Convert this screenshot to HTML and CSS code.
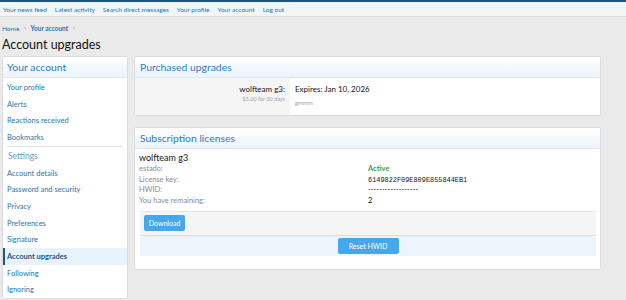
FILE: index.html
```html
<!DOCTYPE html>
<html lang="en">
<head>
    <meta charset="UTF-8">
    <title>Account upgrades</title>
    <link rel="stylesheet" href="styles.css">
</head>
<body>
    <div class="top-strip"></div>
    <nav class="sub-nav">
        <a href="#">Your news feed</a>
        <a href="#">Latest activity</a>
        <a href="#">Search direct messages</a>
        <a href="#">Your profile</a>
        <a href="#">Your account</a>
        <a href="#">Log out</a>
    </nav>

    <div class="page">
        <div class="crumbs">
            <a href="#">Home</a><span class="sep">&gt;</span><a href="#" class="crumb-current">Your account</a><span class="sep">&gt;</span>
        </div>
        <h1 class="page-title">Account upgrades</h1>

        <div class="page-body">
            <aside class="side-block">
                <h3 class="block-head">Your account</h3>
                <div class="side-list">
                    <a href="#" class="side-item">Your profile</a>
                    <a href="#" class="side-item">Alerts</a>
                    <a href="#" class="side-item">Reactions received</a>
                    <a href="#" class="side-item">Bookmarks</a>
                </div>
                <div class="side-list side-list--split">
                    <div class="side-sub">Settings</div>
                    <a href="#" class="side-item">Account details</a>
                    <a href="#" class="side-item">Password and security</a>
                    <a href="#" class="side-item">Privacy</a>
                    <a href="#" class="side-item">Preferences</a>
                    <a href="#" class="side-item">Signature</a>
                    <a href="#" class="side-item is-selected">Account upgrades</a>
                    <a href="#" class="side-item">Following</a>
                    <a href="#" class="side-item">Ignoring</a>
                </div>
            </aside>

            <main class="main-col">
                <section class="block">
                    <h3 class="block-head">Purchased upgrades</h3>
                    <div class="upgrade-row">
                        <div class="upgrade-name">
                            <div class="upgrade-title">wolfteam g3:</div>
                            <div class="upgrade-cost">$5.00 for 30 days</div>
                        </div>
                        <div class="upgrade-info">
                            <div>Expires: Jan 10, 2026</div>
                            <div class="upgrade-note">gmmm</div>
                        </div>
                    </div>
                </section>

                <section class="block block--licenses">
                    <h3 class="block-head">Subscription licenses</h3>
                    <div class="license">
                        <div class="license-name">wolfteam g3</div>
                        <dl class="license-facts">
                            <dt>estado:</dt>
                            <dd class="is-active">Active</dd>
                            <dt>License key:</dt>
                            <dd class="mono">6149822F09E809E855844EB1</dd>
                            <dt>HWID:</dt>
                            <dd>------------------</dd>
                            <dt>You have remaining:</dt>
                            <dd>2</dd>
                        </dl>
                    </div>
                    <div class="license-actions">
                        <button class="btn">Download</button>
                    </div>
                    <div class="license-footer">
                        <button class="btn btn--wide">Reset HWID</button>
                    </div>
                </section>
            </main>
        </div>
    </div>
</body>
</html>
```

FILE: styles.css
```css
:root {
    --link: #2577b1;
    --navy: #185886;
    --border: #dcdcdc;
    --muted: #8c8c8c;
    --text: #141414;
}

* {
    margin: 0;
    padding: 0;
    box-sizing: border-box;
}

body {
    background: #eaeaea;
    font-family: Lato, 'Open Sans', sans-serif;
    color: var(--text);
    font-size: 7.5px;
}

a {
    color: var(--link);
    text-decoration: none;
}

.top-strip {
    height: 2px;
    background: var(--navy);
}

.sub-nav {
    height: 15px;
    background: #f4f5f5;
    border-bottom: 1px solid #dedede;
    display: flex;
    align-items: center;
    gap: 8px;
    padding-left: 3px;
    font-size: 6.5px;
}

.page {
    padding: 0 2px;
}

.crumbs {
    display: flex;
    align-items: center;
    height: 10px;
    margin-top: 6px;
    font-size: 6.5px;
}

.crumbs .sep {
    color: #a6a6a6;
    margin: 0 4px;
    font-size: 5.5px;
}

.crumb-current {
    font-weight: 700;
}

.page-title {
    font-size: 12.5px;
    font-weight: 400;
    line-height: 18px;
    margin-top: 3px;
    margin-bottom: 2px;
}

.page-body {
    display: flex;
    align-items: flex-start;
    gap: 6px;
}

.side-block {
    width: 126px;
    background: #fff;
    border: 1px solid var(--border);
    border-radius: 2px;
}

.block-head {
    height: 21px;
    display: flex;
    align-items: center;
    padding-left: 5px;
    font-size: 10.4px;
    font-weight: 400;
    color: #2f7cbd;
    background: linear-gradient(to bottom, #ffffff, #eaf3fc);
    border-bottom: 1px solid #e2e8ee;
}

.side-block .block-head {
    padding-left: 4px;
}

.side-list {
    display: flex;
    flex-direction: column;
    padding-top: 1px;
}

.side-list--split {
    border-top: 1px solid #e3e3e3;
    margin: 0 4px;
    padding-top: 0;
}

.side-list--split .side-item,
.side-list--split .side-sub {
    margin: 0 -4px;
}

.side-item {
    height: 16.7px;
    display: flex;
    align-items: center;
    font-size: 7.5px;
    border-left: 2px solid transparent;
    padding-left: 2px;
}

.side-item.is-selected {
    background: #e9f3fb;
    border-left-color: var(--navy);
    color: var(--navy);
    font-weight: 700;
}

.side-sub {
    height: 18px;
    display: flex;
    align-items: center;
    padding-left: 5px;
    font-size: 8.5px;
    color: #6a9bc6;
}

.main-col {
    width: 467px;
    display: flex;
    flex-direction: column;
    gap: 11px;
}

.block {
    background: #fff;
    border: 1px solid var(--border);
    border-radius: 2px;
}

.upgrade-row {
    display: flex;
    height: 37px;
}

.upgrade-name {
    width: 155px;
    background: #f5f5f5;
    text-align: right;
    padding: 6px 5px 0 0;
}

.upgrade-title {
    font-size: 8px;
    line-height: 11px;
}

.upgrade-cost {
    font-size: 5.5px;
    color: #a3a3a3;
    line-height: 8px;
}

.upgrade-info {
    padding: 6px 0 0 5px;
    font-size: 8px;
    line-height: 11px;
}

.upgrade-note {
    font-size: 6px;
    color: #a3a3a3;
    margin-top: 2px;
}

.block--licenses {
    padding-bottom: 13px;
}

.license {
    padding: 3px 5px 4px 4px;
}

.license-name {
    font-size: 9px;
    line-height: 12px;
}

.license-facts {
    display: grid;
    grid-template-columns: 229px 1fr;
    font-size: 7.5px;
    line-height: 10.7px;
}

.license-facts dt {
    color: var(--muted);
}

.license-facts .is-active {
    color: #3fa13f;
    font-weight: 700;
}

.license-facts .mono {
    font-family: 'Liberation Mono', monospace;
    font-size: 6.9px;
}

.license-actions,
.license-footer {
    margin: 0 4px 0 5px;
}

.license-actions {
    height: 24px;
    background: #f5f5f5;
    border-top: 1px solid #e6e6e6;
    padding: 3px 4px;
}

.license-footer {
    height: 21px;
    background: #edf5fc;
    border-top: 1px solid #d6dde3;
    display: flex;
    justify-content: center;
    align-items: center;
}

.btn {
    height: 16px;
    width: 41px;
    border: none;
    border-radius: 2px;
    background: #47a7eb;
    color: #fff;
    font-family: inherit;
    font-size: 7px;
}

.btn--wide {
    width: 61px;
}
```
